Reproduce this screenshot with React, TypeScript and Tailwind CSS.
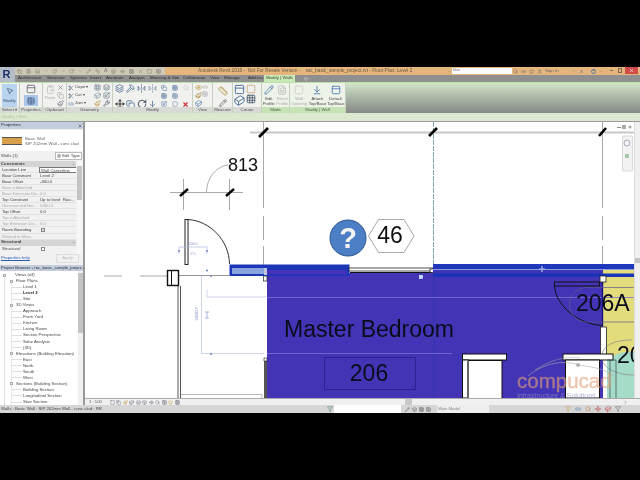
import {
  ArrowDownToLine,
  Box,
  ChevronDown,
  ClipboardPaste,
  Copy,
  Cuboid,
  Eye,
  FileText,
  FlipHorizontal2,
  Grid3x3,
  Hammer,
  Layers,
  Link2,
  Move,
  MousePointer2,
  Paintbrush,
  PanelTop,
  Pencil,
  RotateCw,
  Ruler,
  Scaling,
  Scissors,
  Search,
  Square,
  SquareDashed,
  Star,
  Table,
  User,
  Wrench,
  X,
  Filter,
} from "lucide-react";

const tabs: [string, number][] = [
  ["Architecture", 29],
  ["Structure", 23],
  ["Systems", 20],
  ["Insert", 16],
  ["Annotate", 23],
  ["Analyze", 21],
  ["Massing & Site", 33],
  ["Collaborate", 27],
  ["View", 14],
  ["Manage", 24],
  ["Add-Ins", 16],
];

const propRows: [string, string, boolean?][] = [
  ["Location Line", "Wall Centerline"],
  ["Base Constraint", "Level 2"],
  ["Base Offset", "-300.0"],
  ["Base is Attached", "", true],
  ["Base Extension Dis...", "0.0", true],
  ["Top Constraint", "Up to level: Roo..."],
  ["Unconnected Hei...", "3300.0", true],
  ["Top Offset", "0.0"],
  ["Top is Attached", "", true],
  ["Top Extension Dis...", "0.0", true],
  ["Room Bounding", "check"],
  ["Related to Mass", "", true],
];

const tree: [string, number, boolean?][] = [
  ["Views (all)", 0],
  ["Floor Plans", 1],
  ["Level 1", 2],
  ["Level 2", 2, true],
  ["Site", 2],
  ["3D Views", 1],
  ["Approach", 2],
  ["From Yard", 2],
  ["Kitchen", 2],
  ["Living Room", 2],
  ["Section Perspective", 2],
  ["Solar Analysis", 2],
  ["{3D}", 2],
  ["Elevations (Building Elevation)", 1],
  ["East", 2],
  ["North", 2],
  ["South", 2],
  ["West", 2],
  ["Sections (Building Section)", 1],
  ["Building Section", 2],
  ["Longitudinal Section", 2],
  ["Stair Section", 2],
];

function Section({
  w,
  label,
  green,
  children,
}: {
  w: string;
  label: string;
  green?: boolean;
  children: React.ReactNode;
}) {
  return (
    <div className={`${w} flex flex-col border-r border-[#c4cfc0] ${green ? "bg-[#eef3ea]" : "bg-[#f1f2ef]"}`}>
      <div className="flex h-[24px] items-start">{children}</div>
      <div
        className={`flex h-[6px] items-center justify-center text-[4.3px] text-[#555] ${
          green ? "bg-[#c5e3b4]" : "bg-[#d8dad5]"
        }`}
      >
        {label}
      </div>
    </div>
  );
}

function BigTool({ label, dim, children }: { label: string; dim?: boolean; children: React.ReactNode }) {
  return (
    <div className={`flex flex-1 flex-col items-center pt-[2px] text-[4.2px] leading-[5px] ${dim ? "text-[#aaa]" : "text-[#444]"}`}>
      {children}
      <span className="mt-[1px] whitespace-pre text-center">{label}</span>
    </div>
  );
}

export default function App() {
  return (
    <div className="flex h-[480px] w-[640px] flex-col overflow-hidden bg-black font-['Liberation_Sans',sans-serif] blur-[0.45px]">
      <div className="h-[67px] shrink-0" />

      {/* title bar */}
      <div className="relative flex h-[8px] shrink-0 items-center bg-[#e4b67d] text-[4.8px] text-[#6b5a45]">
        <div className="ml-[15px] flex h-full w-[150px] items-center gap-[4px] bg-[#cfc8b4] pl-[2px] text-[#777]">
          <Copy size={5} />
          <FileText size={5} />
          <Layers size={5} />
          <ChevronDown size={4} />
          <RotateCw size={5} />
          <ChevronDown size={4} />
          <RotateCw size={5} />
          <ChevronDown size={4} />
          <Pencil size={5} />
          <Ruler size={5} />
          <span className="font-bold">A</span>
          <Box size={5} />
          <Eye size={5} />
          <Grid3x3 size={5} />
          <X size={5} />
          <Square size={5} />
          <Table size={5} />
        </div>
        <span className="ml-[33px] whitespace-pre">Autodesk Revit 2016 -  Not For Resale Version -    rac_basic_sample_project.rvt - Floor Plan: Level 2</span>
        <div className="absolute left-[448px] top-[1px] flex h-[6px] items-center gap-[1px]">
          <ChevronDown size={3} className="text-[#555]" />
          <div className="flex h-[6px] w-[60px] items-center bg-white pl-[1px] text-[3.8px] text-[#777]">blue</div>
        </div>
        <div className="absolute left-[513px] top-[1px] flex items-center gap-[3px] text-[#666]">
          <Search size={5} />
          <Link2 size={5} />
          <Star size={5} />
          <User size={5} />
          <span className="w-[24px] text-[4.4px]">Sign In</span>
          <ChevronDown size={4} />
          <X size={5} className="text-[#24608a]" />
          <span className="ml-[4px] flex h-[5px] w-[5px] items-center justify-center rounded-full border border-[#5a7aa0] text-[3.5px] text-[#3a5a90]">
            ?
          </span>
          <ChevronDown size={3} />
        </div>
        <span className="absolute left-[610px] top-[3px] h-px w-[3px] bg-[#806850]" />
        <span className="absolute left-[618px] top-[1px] h-[5px] w-[4px] border border-[#806850]" />
        <div className="absolute left-[625px] top-0 flex h-[7px] w-[13px] items-center justify-center bg-[#d24a4a] text-white">
          <X size={5} strokeWidth={3} />
        </div>
      </div>

      {/* tabs */}
      <div className="relative flex h-[7px] shrink-0 items-center bg-[#8f8f8f] pl-[18px] text-[4.4px] text-[#2c2c2c]">
        {tabs.map(([name, w]) => (
          <span key={name} style={{ width: w }} className="shrink-0 whitespace-nowrap">
            {name}
          </span>
        ))}
        <span className="flex h-[7px] w-[31px] items-center justify-center bg-[#c9e8b8] text-[#3a4a34]">Modify | Walls</span>
        <span className="ml-[9px] flex items-center text-[#ddd]">
          <Box size={4} />
          <ChevronDown size={3} />
        </span>
        <div className="absolute left-0 top-[-8px] flex h-[15px] w-[15px] items-center justify-center bg-[#b4bcc8] pr-[2px] text-[11px] font-bold text-[#1c2f6a]">
          R
        </div>
      </div>

      {/* ribbon */}
      <div className="flex h-[31px] shrink-0 border-t border-[#bde2a9]">
        <Section w="w-[20px]" label="Select ▾">
          <div className="ml-[2px] mt-[1px] flex h-[23px] w-[15px] flex-col items-center bg-[#b9d4ef] pt-[3px] text-[4.2px] text-[#3a4a66]">
            <MousePointer2 size={8} className="text-[#456]" />
            <span className="mt-[3px]">Modify</span>
          </div>
        </Section>
        <Section w="w-[23px]" label="Properties">
          <div className="flex w-full flex-col items-center">
            <PanelTop size={10} className="mt-[1px] text-[#667]" />
            <div className="mt-[1px] flex h-[11px] w-[14px] items-center justify-center bg-[#a9c6e6]">
              <Table size={8} className="text-[#334c78]" />
            </div>
          </div>
        </Section>
        <Section w="w-[24px]" label="Clipboard">
          <BigTool label="Paste" dim>
            <ClipboardPaste size={9} className="text-[#bbb]" />
          </BigTool>
          <div className="flex w-[9px] flex-col gap-[1px] pt-[1px] text-[#667]">
            <X size={7} />
            <Copy size={7} className="text-[#aaa]" />
            <Paintbrush size={7} />
          </div>
        </Section>
        <Section w="w-[46px]" label="Geometry">
          <div className="grid grid-cols-[26px_9px_9px] items-center gap-y-[1px] pl-[1px] pt-[1px] text-[4.3px] text-[#444]">
            <span className="flex items-center gap-[1px]"><Scissors size={6} className="text-[#567]" />Cope ▾</span>
            <Grid3x3 size={7} className="text-[#789]" />
            <Layers size={7} className="text-[#567]" />
            <span className="flex items-center gap-[1px]"><Scissors size={6} className="text-[#567]" />Cut ▾</span>
            <Cuboid size={7} className="text-[#789]" />
            <Scaling size={7} className="text-[#567]" />
            <span className="flex items-center gap-[1px]"><Link2 size={6} className="text-[#4a7ab0]" />Join ▾</span>
            <Paintbrush size={7} className="text-[#c08a30]" />
            <Wrench size={7} className="text-[#345]" />
          </div>
        </Section>
        <Section w="w-[80px]" label="Modify">
          <div className="grid grid-cols-[repeat(7,11px)] grid-rows-[8px_8px_8px] place-items-center pl-[1px] pt-[1px] text-[#4a6a96]">
            <Layers size={9} />
            <Hammer size={9} />
            <FlipHorizontal2 size={9} />
            <FlipHorizontal2 size={9} className="text-[#7a8ca8]" />
            <Copy size={6} />
            <Grid3x3 size={6} />
            <Search size={6} className="text-[#bbb]" />
            <span />
            <span />
            <span />
            <span />
            <Grid3x3 size={6} />
            <Table size={6} />
            <span />
            <Move size={10} className="text-[#111]" />
            <Copy size={9} />
            <RotateCw size={10} className="text-[#234]" />
            <ArrowDownToLine size={9} />
            <Scaling size={6} />
            <SquareDashed size={6} />
            <X size={7} strokeWidth={4} className="text-[#d0303a]" />
          </div>
        </Section>
        <Section w="w-[20px]" label="View">
          <div className="flex flex-col gap-[1px] pl-[2px] pt-[1px] text-[#667]">
            <Eye size={7} className="text-[#b89030]" />
            <Paintbrush size={7} className="text-[#a07820]" />
            <Cuboid size={7} className="text-[#4a7ab0]" />
          </div>
          <div className="flex flex-col gap-[1px] pt-[1px] text-[#aaa]">
            <Link2 size={6} />
            <Table size={6} />
          </div>
        </Section>
        <Section w="w-[20px]" label="Measure">
          <div className="flex w-full flex-col items-center gap-[3px] pt-[3px]">
            <Ruler size={10} className="text-[#b08a30]" />
            <Pencil size={8} className="text-[#555]" />
          </div>
        </Section>
        <Section w="w-[29px]" label="Create">
          <div className="flex flex-col pl-[1px] pt-[1px] text-[#4a6a96]">
            <PanelTop size={11} />
            <Cuboid size={11} />
          </div>
          <div className="flex flex-col pl-[1px] pt-[1px] text-[#b07838]">
            <SquareDashed size={10} />
            <Grid3x3 size={10} className="text-[#456]" />
          </div>
        </Section>
        <Section w="w-[28px]" label="Mode" green>
          <BigTool label={"Edit\nProfile"}>
            <Pencil size={10} className="text-[#4a7ab0]" />
          </BigTool>
          <BigTool label={"Reset\nProfile"} dim>
            <FileText size={10} className="text-[#bbb]" />
          </BigTool>
        </Section>
        <Section w="w-[56px]" label="Modify | Wall" green>
          <BigTool label={"Wall\nOpening"} dim>
            <Square size={10} className="text-[#ccc]" />
          </BigTool>
          <BigTool label={"Attach\nTop/Base"}>
            <ArrowDownToLine size={10} className="text-[#4a7ab0]" />
          </BigTool>
          <BigTool label={"Detach\nTop/Base"}>
            <PanelTop size={10} className="text-[#4a7ab0]" />
          </BigTool>
        </Section>
        <div className="flex-1 bg-gradient-to-b from-[#d2e6c9] via-[#a8b5a4] to-[#868886]" />
      </div>

      {/* options bar */}
      <div className="flex h-[9px] shrink-0 items-center border-b border-[#9a9a9a] bg-[#dce8cf] pl-[2px] text-[4.3px] text-[#b4bfa8]">
        Modify | Wall
      </div>

      {/* main */}
      <div className="flex h-[283px] shrink-0">
        {/* left panels */}
        <div className="flex w-[85px] shrink-0 flex-col border-r-2 border-[#9a9a9a] bg-[#f1f1f1] text-[4.3px] text-[#444]">
          <div className="flex h-[7px] shrink-0 items-center justify-between bg-[#c2cede] px-[1px] text-[4.4px] text-[#2d2d2d]">
            Properties
            <X size={4} strokeWidth={3} />
          </div>
          <div className="mt-[1px] flex h-[21px] shrink-0 items-center bg-white pl-[2px]">
            <div className="flex h-[8px] w-[20px] flex-col justify-center border-y border-[#555] bg-[#d8a04a]" />
            <div className="ml-[3px] w-[56px] whitespace-nowrap leading-[5px] text-[#666]">
              Basic Wall
              <br />
              SIP 202mm Wall - conc clad
            </div>
          </div>
          <div className="flex h-[10px] shrink-0 items-center justify-between px-[1px]">
            <span>Walls (1)</span>
            <span className="flex items-center gap-[1px] border border-[#bbb] bg-white px-[1px]">
              <FileText size={4} />
              Edit Type
            </span>
          </div>
          <div className="flex h-[93px] shrink-0">
            <div className="w-[77px] overflow-hidden">
              <div className="flex h-[6px] items-center justify-between bg-[#d5d5d5] px-[1px] font-bold">
                Constraints
                <ChevronDown size={3} />
              </div>
              {propRows.map(([k, v, dim]) => (
                <div
                  key={k}
                  className={`grid h-[6.05px] grid-cols-[39px_38px] items-center border-b border-[#e2e2e2] leading-[6px] ${
                    dim ? "text-[#aaa]" : ""
                  }`}
                >
                  <span className="whitespace-nowrap pl-[2px] tracking-[-0.12px]">{k}</span>
                  {v === "check" ? (
                    <span className="ml-[2px] flex h-[4px] w-[4px] items-center justify-center border border-[#888] bg-white text-[3px]">
                      ✓
                    </span>
                  ) : v === "Wall Centerline" ? (
                    <span className="h-[6px] border border-[#777] bg-white pl-[1px]">{v}</span>
                  ) : (
                    <span className="whitespace-nowrap pl-[1px]">{v}</span>
                  )}
                </div>
              ))}
              <div className="flex h-[6px] items-center justify-between bg-[#d5d5d5] px-[1px] font-bold">
                Structural
                <ChevronDown size={3} />
              </div>
              <div className="grid h-[6px] grid-cols-[39px_38px] items-center leading-[6px]">
                <span className="pl-[2px]">Structural</span>
                <span className="ml-[2px] h-[4px] w-[4px] border border-[#888] bg-white" />
              </div>
            </div>
            <div className="mx-[1px] flex w-[5px] flex-col bg-[#f7f7f7]">
              <div className="mt-[5px] h-[34px] bg-[#c4c4c4]" />
            </div>
          </div>
          <div className="flex h-[9px] shrink-0 items-center justify-between px-[1px]">
            <span className="text-[#2a5db0] underline">Properties help</span>
            <span className="mr-[3px] border border-[#ddd] px-[5px] text-[#bbb]">Apply</span>
          </div>
          <div className="mt-[2px] flex h-[6px] shrink-0 items-center justify-between whitespace-nowrap bg-[#c2cede] px-[1px] text-[4.2px] text-[#2d2d2d]">
            Project Browser - rac_basic_sample_projec...
            <X size={4} strokeWidth={3} />
          </div>
          <div className="flex min-h-0 flex-1 bg-white">
            <div className="relative w-[78px] overflow-hidden pt-[1px]">
              <div className="absolute bottom-0 left-[4px] top-[6px] w-px bg-[#e0e0e0]" />
              <div className="absolute bottom-0 left-[11px] top-[12px] w-px bg-[#e6e6e6]" />
              {tree.map(([label, depth, bold]) => (
                <div key={label} className="relative flex h-[6.05px] items-center whitespace-nowrap leading-[6px]">
                  {depth === 0 && (
                    <span className="ml-[3px] mr-[9px] h-[3px] w-[3px] border border-[#aaa] bg-white" />
                  )}
                  {depth === 1 && (
                    <span className="ml-[10px] mr-[3px] h-[3px] w-[3px] border border-[#aaa] bg-white" />
                  )}
                  {depth === 2 && <span className="ml-[12px] mr-[1px] h-px w-[10px] bg-[#ddd]" />}
                  <span className={bold ? "font-bold text-[#222]" : ""}>{label}</span>
                </div>
              ))}
            </div>
            <div className="flex w-[5px] flex-col bg-[#f0f0f0]">
              <div className="mt-[2px] h-[60px] bg-[#c4c4c4]" />
            </div>
          </div>
        </div>

        {/* canvas */}
        <div className="flex min-w-0 flex-1 flex-col">
          <div className="flex min-h-0 flex-1">
            <svg viewBox="85 122 549 276" className="h-[276px] w-[549px] shrink-0 bg-white" fontFamily="'Liberation Sans', sans-serif">
              {/* room fills */}
              <rect x="267" y="273" width="336" height="125" fill="#4333b5" />
              <rect x="603" y="270" width="31" height="90" fill="#e2dc7c" />
              <path d="M607 398V360Q620 350 634 352V398Z" fill="#a5dcc7" />
              {/* grids */}
              <line x1="250" y1="132.5" x2="634" y2="132.5" stroke="#c8c8c8" strokeWidth="2" />
              <line x1="263.5" y1="122" x2="263.5" y2="208" stroke="#aaa" />
              <line x1="263.5" y1="216" x2="263.5" y2="276" stroke="#aaa" strokeDasharray="24 6" />
              <line x1="602.5" y1="122" x2="602.5" y2="208" stroke="#aaa" />
              <line x1="602.5" y1="216" x2="602.5" y2="270" stroke="#aaa" strokeDasharray="24 6" />
              <line x1="433.5" y1="122" x2="433.5" y2="265" stroke="#7fa8b0" strokeDasharray="5 1" />
              <line x1="433.5" y1="277" x2="433.5" y2="398" stroke="#2a3aa8" strokeDasharray="5 1" />
              <g stroke="#000" strokeWidth="2.6">
                <line x1="259" y1="137" x2="268" y2="128" />
                <line x1="429" y1="136" x2="437" y2="128" />
                <line x1="599" y1="136" x2="606" y2="128" />
              </g>

              {/* dimension 813 */}
              <g stroke="#aaa" fill="none">
                <line x1="170" y1="192.5" x2="243" y2="192.5" />
                <line x1="183.5" y1="179" x2="183.5" y2="210" />
                <line x1="229.5" y1="179" x2="229.5" y2="210" />
                <path d="M206.5 192C207 176 218 166 228 165" />
              </g>
              <g stroke="#000" strokeWidth="2.4">
                <line x1="180" y1="196" x2="188" y2="189" />
                <line x1="226" y1="196" x2="234" y2="189" />
              </g>
              <text x="228" y="171" fontSize="18" fill="#111">813</text>

              {/* door */}
              <rect x="185" y="219.5" width="3" height="45" fill="#fff" stroke="#222" />
              <path d="M188 219.5C210 221 229 240 229.5 264" fill="none" stroke="#333" />
              <g stroke="#aab6e0" fill="none" strokeWidth="0.7">
                <path d="M179 247V254M179 247H207M207 247V254" />
                <path d="M191 253H195M191 253V255M195 253V255" />
              </g>
              <text x="193" y="245" fontSize="3.6" textAnchor="middle" fill="#7688c8">500.0</text>
              <circle cx="179" cy="251" r="0.9" fill="#6a7cc0" />
              <circle cx="207" cy="251" r="0.9" fill="#6a7cc0" />

              {/* left wall */}
              <line x1="104" y1="276" x2="122" y2="276" stroke="#aaa" />
              <line x1="140" y1="276" x2="167" y2="276" stroke="#aaa" />
              <line x1="179" y1="275.5" x2="229" y2="275.5" stroke="#999" />
              <rect x="167.5" y="270.5" width="11" height="15" fill="#fff" stroke="#111" strokeWidth="1.4" />
              <rect x="171" y="271" width="1" height="14" fill="#111" />
              <line x1="178" y1="286" x2="178" y2="398" stroke="#555" />
              <line x1="180.5" y1="286" x2="180.5" y2="398" stroke="#555" />
              <path d="M181 394.5H262V398" fill="none" stroke="#bbb" />

              {/* constraint dims */}
              <g stroke="#c4ccea" fill="none" strokeWidth="0.8">
                <path d="M201.5 276V354M201 353.5H264" />
                <path d="M207 290V297M207 297H267" />
              </g>
              <path d="M267 297.5H634M267 353.5H452" stroke="#7d70cf" strokeWidth="0.8" />
              <text transform="translate(198 314) rotate(-90)" fontSize="3.8" textAnchor="middle" fill="#7688c8">13060.7</text>
              <path d="M205 312H209M207 312V318M205 318H209" stroke="#8a98d0" strokeWidth="0.7" fill="none" />
              <circle cx="207" cy="270.5" r="1" fill="#6a7cc0" />
              <circle cx="211" cy="276" r="0.9" fill="#6a7cc0" />
              <circle cx="211" cy="354" r="1" fill="#6a7cc0" />

              {/* inner wall under grid */}
              <rect x="263.5" y="276" width="3.5" height="5" fill="#fff" stroke="#222" strokeWidth="0.7" />
              <rect x="264" y="360" width="3" height="38" fill="#555" />
              <rect x="264" y="358" width="3" height="3" fill="#fff" stroke="#222" strokeWidth="0.6" />

              {/* selected wall */}
              <rect x="229.5" y="264.5" width="120" height="11.5" fill="#1c36b8" />
              <rect x="232" y="268" width="35" height="6" fill="#8aa4dc" />
              <rect x="267" y="270" width="80" height="4.5" fill="#4433b8" />
              <rect x="264" y="268" width="3" height="7" fill="#c0c8e0" />
              <rect x="349" y="268" width="84" height="3" fill="#fff" stroke="#222" strokeWidth="0.8" />
              <line x1="350" y1="272.5" x2="432" y2="272.5" stroke="#111" />
              <rect x="430" y="269" width="3.5" height="3.5" fill="#fff" stroke="#222" strokeWidth="0.8" />
              <rect x="433" y="264" width="201" height="5" fill="#1f38bb" />
              <line x1="433" y1="269.5" x2="634" y2="269.5" stroke="#8e9fdb" />
              <rect x="433" y="270" width="170" height="3.5" fill="#3d34b8" />
              <rect x="433" y="273.5" width="201" height="3.5" fill="#1a33b8" />
              <path d="M542 266V272M539 269H545" stroke="#aeb8dc" strokeWidth="1.2" />
              <rect x="419.5" y="275.5" width="3" height="3" fill="#a8e4ff" stroke="#fff" strokeWidth="0.6" />

              {/* tag 46 */}
              <circle cx="348" cy="238" r="18" fill="#4d7fc6" stroke="#27538f" strokeWidth="1" />
              <text x="348" y="248" fontSize="29" fontWeight="bold" textAnchor="middle" fill="#f4f4f4">?</text>
              <path d="M368.5 236L378.5 219.5H404L414 236L404 252.5H378.5Z" fill="#fff" stroke="#aaa" />
              <text x="390" y="243" fontSize="23" textAnchor="middle" fill="#111">46</text>

              {/* room text */}
              <text x="284" y="337" fontSize="23" fill="#0b0b1a">Master Bedroom</text>
              <rect x="324.5" y="357.5" width="91" height="32" fill="none" stroke="#2b2490" />
              <text x="369" y="381" fontSize="23" textAnchor="middle" fill="#0b0b1a">206</text>

              {/* door 206A */}
              <rect x="554.5" y="282" width="45" height="4" fill="#4333b5" stroke="#111" />
              <path d="M554.5 286C556 306 578 324 602 325.5" fill="none" stroke="#111" />
              <line x1="602.5" y1="281" x2="602.5" y2="326" stroke="#14147a" strokeWidth="1.4" />
              <rect x="600" y="276" width="6" height="6" fill="#fff" stroke="#222" strokeWidth="0.8" />
              <rect x="569.5" y="287.5" width="80" height="34.5" rx="17" fill="none" stroke="#5a5a90" strokeWidth="0.7" />
              <text x="576" y="311" fontSize="23" fill="#0b0b1a">206A</text>

              {/* lower walls */}
              <rect x="600.5" y="327" width="6" height="30" fill="#fff" stroke="#222" strokeWidth="0.8" />
              <path d="M632 340C615 340 601 345 602 358C603 370 620 375 634 375" fill="none" stroke="#888" strokeWidth="0.7" />
              <rect x="462.5" y="354" width="44" height="6" fill="#fff" stroke="#111" />
              <rect x="462.5" y="360" width="6" height="38" fill="#fff" stroke="#111" />
              <rect x="468" y="360" width="34" height="38" fill="#fff" />
              <line x1="468" y1="361" x2="468" y2="398" stroke="#666" strokeWidth="2" />
              <line x1="502" y1="360" x2="502" y2="398" stroke="#111" />
              <line x1="468" y1="360.5" x2="502" y2="360.5" stroke="#111" />
              <rect x="563" y="354" width="50" height="6" fill="#fff" stroke="#111" />
              <rect x="565.5" y="360" width="34" height="38" fill="#fff" stroke="#111" />
              <path d="M607 360H616V398M610 360V398" fill="none" stroke="#456" strokeWidth="0.8" />
              <text x="617" y="363" fontSize="23" fill="#0b0b1a">20</text>

              {/* watermark */}
              <path d="M528 376C545 362 565 360 578 365C595 367 610 370 618 380" fill="none" stroke="#aaa" opacity="0.6" />
              <path d="M535 370C550 360 565 356 580 358" fill="none" stroke="#aaa" opacity="0.5" />
              <circle cx="578" cy="365" r="2" fill="#999" opacity="0.7" />
              <text x="517" y="388" fontSize="20.5" fill="#e0a27a" stroke="#e0a27a" strokeWidth="0.4" opacity="0.62">compucad</text>
              <text x="517" y="398" fontSize="7" fill="#8e90c8" opacity="0.7">Infrastructure &amp; Solutions</text>

              {/* view icons + nav bar */}
              <path d="M617 127.5H621" stroke="#888" />
              <rect x="622" y="125" width="4" height="4" fill="#aaa" />
              <circle cx="630" cy="127" r="1.6" fill="#aaa" />
              <rect x="622.5" y="136" width="10" height="35" rx="1" fill="#f2f2f2" stroke="#ccc" strokeWidth="0.7" />
              <circle cx="627" cy="143" r="3" fill="none" stroke="#aab" />
              <rect x="625" y="154" width="4" height="4" fill="#a8c8a8" />
            </svg>
            <div className="flex w-[6px] shrink-0 flex-col items-center border-l border-[#ddd] bg-[#f0f0f0]">
              <div className="mt-[136px] h-[5px] w-full bg-[#c4c4c4]" />
            </div>
          </div>
          <div className="flex h-[7px] shrink-0 items-center border-t border-[#aaa] bg-[#f0f0f0] text-[4.2px] text-[#555]">
            <span className="ml-[4px] mr-[8px]">1 : 100</span>
            <span className="flex gap-[1.5px] text-[#667]">
              <Square size={5} />
              <Copy size={5} />
              <Paintbrush size={5} className="text-[#c08a30]" />
              <Cuboid size={5} />
              <Layers size={5} />
              <Box size={5} />
              <Eye size={5} />
              <Search size={5} />
              <Table size={5} />
              <Star size={5} className="text-[#c08a30]" />
              <Grid3x3 size={5} />
            </span>
            <div className="ml-[225px] h-full w-[7px] bg-[#c8c8c8]" />
            <ChevronDown size={5} className="ml-[211px] -rotate-90" />
          </div>
        </div>
      </div>

      {/* status bar */}
      <div className="flex h-[8px] shrink-0 items-center bg-[#d6d6d6] text-[4.3px] text-[#444]">
        <span className="w-[327px] whitespace-nowrap pl-[1px]">Walls : Basic Wall : SIP 202mm Wall - conc clad : RR</span>
        <Filter size={6} className="text-[#3a8a5a]" />
        <div className="ml-[1px] h-full w-[67px] bg-white" />
        <span className="ml-[4px] flex w-[32px] gap-[2px] text-[#666]">
          <Pencil size={5} />
          <Box size={5} />
          <Grid3x3 size={5} />
          <Table size={5} />
        </span>
        <div className="h-full w-[52px] bg-[#eee] pl-[1px] leading-[8px] text-[#888]">Main Model</div>
        <span className="ml-[76px] flex gap-[4px]">
          <Filter size={6} className="text-[#d0a030]" />
          <Link2 size={6} className="text-[#4a7ab0]" />
          <Search size={6} className="text-[#c08040]" />
          <Move size={6} className="text-[#c04040]" />
          <Cuboid size={6} className="text-[#c04040]" />
          <Filter size={6} className="text-[#666]" />
        </span>
      </div>
      <div className="flex-1" />
    </div>
  );
}
